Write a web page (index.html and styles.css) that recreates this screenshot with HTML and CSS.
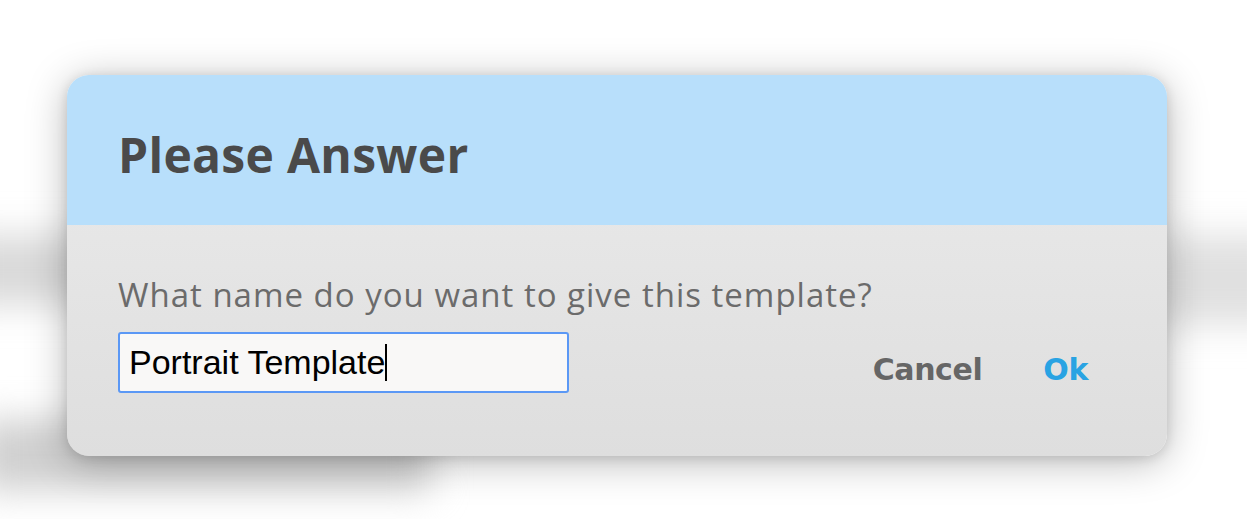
FILE: index.html
```html
<!DOCTYPE html>
<html>
<head>
<meta charset="utf-8">
<link rel="stylesheet" href="styles.css">
</head>
<body>
<div class="backdrop">
  <div class="blur blur-left"></div>
  <div class="blur blur-bottom"></div>
  <div class="blur blur-right"></div>
</div>
<div class="page">
  <div class="dialog">
    <div class="dialog-header">
      <h1 class="dialog-title">Please Answer</h1>
    </div>
    <div class="dialog-body">
      <p class="question">What name do you want to give this template?</p>
      <div class="answer-row">
        <div class="text-input"><span class="input-value">Portrait Template</span><span class="caret"></span></div>
        <div class="actions">
          <button class="btn btn-cancel">Cancel</button>
          <button class="btn btn-ok">Ok</button>
        </div>
      </div>
    </div>
  </div>
</div>
</body>
</html>
```

FILE: styles.css
```css
html, body {
  margin: 0;
  padding: 0;
  background: #ffffff;
  width: 1247px;
  height: 519px;
  overflow: hidden;
}

body {
  position: relative;
  font-family: "Open Sans", Lato, sans-serif;
}

.backdrop {
  position: absolute;
  inset: 0;
  z-index: 0;
}

.blur {
  position: absolute;
  filter: blur(18px);
}

.blur-left {
  left: -40px;
  top: 235px;
  width: 140px;
  height: 70px;
  background: #d9d9d9;
}

.blur-bottom {
  left: -20px;
  top: 420px;
  width: 450px;
  height: 70px;
  background: #cfcfcf;
}

.blur-right {
  left: 1150px;
  top: 235px;
  width: 140px;
  height: 90px;
  background: #e0e0e0;
}

.page {
  position: relative;
  z-index: 1;
  padding: 75px 0 0 67px;
}

.dialog {
  width: 1100px;
  height: 381px;
  border-radius: 22px;
  overflow: hidden;
  box-shadow: 0 6px 40px rgba(0, 0, 0, 0.28), 0 2px 12px rgba(0, 0, 0, 0.12);
  background: linear-gradient(#ececec, #dedede);
  display: flex;
  flex-direction: column;
}

.dialog-header {
  height: 150px;
  background: #b8dffb;
  display: flex;
  align-items: center;
  padding: 8px 0 0 51px;
  box-sizing: border-box;
}

.dialog-title {
  margin: 0;
  font-family: "Open Sans", Lato, sans-serif;
  font-size: 48px;
  line-height: 65px;
  font-weight: 700;
  color: #4a4a4a;
  letter-spacing: 0.3px;
}

.dialog-body {
  flex: 1;
  padding: 50px 79px 0 51px;
  display: flex;
  flex-direction: column;
}

.question {
  margin: 0;
  font-family: "Open Sans", Lato, sans-serif;
  font-size: 33px;
  line-height: 40px;
  color: #6b6b6b;
  font-weight: 400;
  letter-spacing: 1px;
}

.answer-row {
  margin-top: 17px;
  display: flex;
  align-items: center;
  justify-content: space-between;
}

.text-input {
  width: 451px;
  height: 61px;
  box-sizing: border-box;
  border: 2px solid #5b98f5;
  border-radius: 3px;
  background: #f9f8f7;
  display: flex;
  align-items: center;
  padding: 0 0 0 9px;
  font-family: "Liberation Sans", Arial, sans-serif;
  font-size: 34px;
  color: #000;
}

.caret {
  display: inline-block;
  width: 2px;
  height: 37px;
  background: #000;
  margin-left: 0;
}

.actions {
  display: flex;
  align-items: center;
  gap: 61px;
  margin-top: 14px;
}

.btn {
  border: 0;
  background: none;
  padding: 0;
  font-family: "DejaVu Sans", "Open Sans", sans-serif;
  font-weight: 700;
  font-size: 30px;
  line-height: 34px;
  letter-spacing: -0.4px;
  cursor: pointer;
}

.btn-cancel {
  color: #666666;
}

.btn-ok {
  color: #29a3e3;
}
```
